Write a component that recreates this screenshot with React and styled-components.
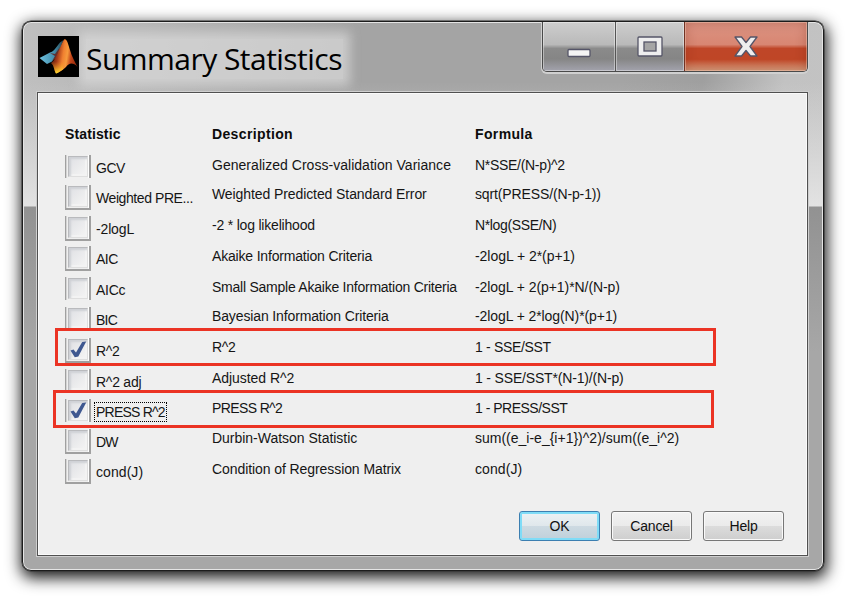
import React from 'react';
import styled, { createGlobalStyle, css } from 'styled-components';

const Global = createGlobalStyle`
  * { box-sizing: border-box; }
  body { margin: 0; background: #fff; font-family: "Liberation Sans", Arial, sans-serif; }
`;

const Desktop = styled.main`
  width: 858px;
  height: 600px;
  padding: 21px 0 0 22px;
  overflow: hidden;
  background: #fff;
`;

const Window = styled.section`
  display: flex;
  flex-direction: column;
  width: 802px;
  height: 550px;
  border: 1px solid #1c1c1c;
  border-radius: 9px;
  padding: 0 15px 14px 14px;
  box-shadow: inset 0 0 0 1px #e4e4e4, 0 0 0 0.5px #333, 1px 5px 15px 2px rgba(0, 0, 0, 0.9);
  background:
    linear-gradient(180deg, transparent 60px, rgba(232, 232, 232, 0.85) 184px, #929292 185px, #a7a7a7 330px, #a7a7a7 100%),
    linear-gradient(100deg, #c0c0c0 0, #b6b6b6 120px, #a4a4a4 330px, #a4a4a4 600px, #9f9f9f 680px, #c2c2c2 760px, #c4c4c4 100%);
`;

const TitleBar = styled.header`
  display: flex;
  align-items: flex-start;
  height: 70px;
  flex: none;
`;

const Logo = styled.svg`
  position: relative;
  flex: none;
  margin: 14px 0 0 1px;
`;

const Title = styled.h1`
  flex: none;
  margin: 17px 0 0 7px;
  width: 257px;
  font: 400 30px/40px "Open Sans", "Noto Sans", sans-serif;
  letter-spacing: -0.53px;
  white-space: nowrap;
  color: #000;
  background: rgba(218, 218, 218, 0.7);
  box-shadow: 0 0 10px 7px rgba(218, 218, 218, 0.7);
`;

const Controls = styled.div`
  display: flex;
  margin-left: auto;
  width: 266px;
  height: 50px;
  border: 1px solid #4a4a4a;
  border-top: 0;
  border-radius: 0 0 5px 5px;
  box-shadow: 0 1px 0 1px #d0d0d0;
  clip-path: inset(0 -3px -3px -3px);
  overflow: hidden;
`;

const Control = styled.button`
  display: grid;
  place-items: center;
  width: ${(p) => p.$width}px;
  padding: 0;
  border: 0;
  border-left: ${(p) => (p.$divided ? '1px solid #555' : '0')};
  box-shadow: inset 0 0 0 1px rgba(255, 255, 255, 0.4);
  background: linear-gradient(#cecece, #b9b9b9 46%, #8b8b8b 54%, #858585 75%, #a3a3ad);
  ${(p) => p.$close && css`
    border-left-color: #713223;
    box-shadow: inset 0 0 0 1px rgba(255, 220, 200, 0.4), inset 0 0 12px rgba(100, 20, 0, 0.3);
    background: linear-gradient(#dc9483, #d88672 46%, #bf4628 54%, #bf4626 76%, #dca585);
  `}
`;

const Panel = styled.div`
  position: relative;
  flex: 1;
  border: 1px solid #505050;
  box-shadow: 0 0 0 1px #cfcfcf, inset 0 0 0 1px #fafafa;
  background: #efefef;
  display: flex;
  flex-direction: column;
  padding: 31px 23px 14px 27px;
  font-size: 14px;
  color: #151515;
`;

const columns = css`
  display: grid;
  grid-template-columns: 147px 263px 1fr;
`;

const HeaderRow = styled.div`
  ${columns}
  height: 31px;
  flex: none;
  font-weight: 700;
  line-height: 22px;
  color: #0c0c0c;
`;

const Row = styled.div`
  ${columns}
  flex: none;
  height: ${(p) => p.$height}px;
`;

const Cell = styled.span`
  line-height: ${(p) => (p.$raised ? 18 : 20)}px;
  white-space: nowrap;
  letter-spacing: ${(p) => p.$spacing || 0}px;
`;

const Choice = styled.label`
  display: flex;
  align-items: flex-start;
  white-space: nowrap;
`;

const CheckFrame = styled.span`
  flex: none;
  width: 26px;
  height: ${(p) => (p.$clipped ? 23 : 25)}px;
  padding: 1px 1px 0 2px;
  border: solid #a0a0a0;
  border-width: 0 2px ${(p) => (p.$clipped ? 0 : 2)}px 1px;
  box-shadow: inset 1px 0 0 #d4d4d4, inset -1px 0 0 #fff;
`;

const CheckBox = styled.span`
  display: block;
  width: 20px;
  height: 21px;
  border: 1px solid #b9babd;
  border-right-color: #dedede;
  border-bottom-color: #dedede;
  box-shadow: inset 2px 2px 2px #cfd1d6, inset -2px -2px 1px #f3f3f3;
  background: linear-gradient(135deg, #dfe0e4, #f2f2f2 85%);
`;

const CheckMark = styled.svg`
  display: block;
`;

const ChoiceText = styled.span`
  margin: ${(p) => (p.$raised ? 3 : 4)}px 0 0 4px;
  padding: 0 1px;
  line-height: 18px;
  letter-spacing: ${(p) => p.$spacing || 0}px;
  outline: ${(p) => (p.$focused ? '1px dotted #000' : 'none')};
`;

const Actions = styled.footer`
  display: flex;
  justify-content: flex-end;
  gap: 11px;
  margin-top: auto;
`;

const Action = styled.button`
  width: 81px;
  height: 30px;
  padding: 0;
  border: 1px solid ${(p) => (p.$primary ? '#3c7fb1' : '#777')};
  border-radius: 3px;
  box-shadow: inset 0 0 0 ${(p) => (p.$primary ? '2px #7fdcf7' : '1px #fafafa')};
  background: ${(p) => (p.$primary
    ? 'linear-gradient(#edf2f5, #dfe7eb 50%, #cddae2 51%, #bfd0da)'
    : 'linear-gradient(#f2f2f2, #ebebeb 50%, #dcdcdc 51%, #cecece)')};
  font: 14px "Liberation Sans", Arial, sans-serif;
  letter-spacing: -0.2px;
  color: #111;
`;

const Highlight = styled.div`
  position: absolute;
  left: ${(p) => p.$left}px;
  top: ${(p) => p.$top}px;
  width: 661px;
  height: 38px;
  border: 3px solid #eb3324;
  pointer-events: none;
`;

/* spacing: letter spacing of the name, description and formula cells */
const rows = [
  { name: 'GCV', text: 'Generalized Cross-validation Variance', formula: 'N*SSE/(N-p)^2', h: 30, clipped: true, spacing: [-0.5, 0.03, -0.3] },
  { name: 'Weighted PRE...', text: 'Weighted Predicted Standard Error', formula: 'sqrt(PRESS/(N-p-1))', h: 31, raised: true, spacing: [-0.42, -0.09, -0.13] },
  { name: '-2logL', text: '-2 * log likelihood', formula: 'N*log(SSE/N)', h: 30, raised: true, spacing: [-0.15, -0.2, -0.35] },
  { name: 'AIC', text: 'Akaike Information Criteria', formula: '-2logL + 2*(p+1)', h: 31, spacing: [-0.5, -0.18, -0.05] },
  { name: 'AICc', text: 'Small Sample Akaike Information Criteria', formula: '-2logL + 2(p+1)*N/(N-p)', h: 30, clipped: true, spacing: [-0.25, -0.24, -0.07] },
  { name: 'BIC', text: 'Bayesian Information Criteria', formula: '-2logL + 2*log(N)*(p+1)', h: 31, clipped: true, raised: true, spacing: [-0.8, -0.13, -0.09] },
  { name: 'R^2', text: 'R^2', formula: '1 - SSE/SST', h: 31, checked: true, raised: true, spacing: [-0.3, -0.3, -0.33] },
  { name: 'R^2 adj', text: 'Adjusted R^2', formula: '1 - SSE/SST*(N-1)/(N-p)', h: 30, clipped: true, raised: true, spacing: [-0.25, -0.05, -0.17] },
  { name: 'PRESS R^2', text: 'PRESS R^2', formula: '1 - PRESS/SST', h: 30, checked: true, clipped: true, focused: true, raised: true, spacing: [-0.78, -0.62, -0.5] },
  { name: 'DW', text: 'Durbin-Watson Statistic', formula: 'sum((e_i-e_{i+1})^2)/sum((e_i^2)', h: 30, raised: true, spacing: [-0.9, -0.02, 0] },
  { name: 'cond(J)', text: 'Condition of Regression Matrix', formula: 'cond(J)', h: 30, spacing: [0.07, -0.08, 0.1] },
];

function MatlabLogo() {
  return (
    <Logo width="41" height="41" viewBox="0 0 41 41">
      <defs>
        <linearGradient id="peak" x1="0" y1="0.4" x2="1" y2="0.6">
          <stop offset="0" stopColor="#4a140c" />
          <stop offset="0.25" stopColor="#a53a18" />
          <stop offset="0.45" stopColor="#f08030" />
          <stop offset="0.6" stopColor="#f79a3c" />
          <stop offset="0.75" stopColor="#c4461a" />
          <stop offset="1" stopColor="#8c2408" />
        </linearGradient>
        <linearGradient id="base" x1="0" y1="0" x2="0" y2="1">
          <stop offset="0.65" stopColor="#f59a20" stopOpacity="0" />
          <stop offset="1" stopColor="#ffe22e" />
        </linearGradient>
        <linearGradient id="wing" x1="0" y1="0" x2="1" y2="0">
          <stop offset="0" stopColor="#6fc0de" />
          <stop offset="0.6" stopColor="#438fae" />
          <stop offset="1" stopColor="#28454f" />
        </linearGradient>
      </defs>
      <rect width="41" height="41" fill="#000" />
      <path d="M1.5 22 L12 16.5 C16 16 18 11 22 6.500 L25.500 4 L20 18 L14 25.500 L9 28 Z" fill="url(#wing)" />
      <path d="M12 17 L17 18 L22 11 L19 21 L14 25 L17 20 Z" fill="#5f3030" />
      <path d="M26 3.500 C29 2 30 8 32 14 C34 21 37 26 39.500 31 C35 26 31 27 28 31 C25 34 22 36 18 37.500 C16 34 16 29 13 27 C19 23 21 12 26 3.500 Z" fill="url(#peak)" />
      <path d="M26 3.500 C28 3 28 9 27 17 L25 33.500 C22 35 20 37 18 37.500 C16 34 16 29 13 27 C19 23 21 12 26 3.500 Z" fill="url(#base)" />
    </Logo>
  );
}

function Check() {
  return (
    <CheckMark width="18" height="19" viewBox="0 0 18 19">
      <path d="M1.500 10.500 L4.500 9.500 L7 12.500 L13.200 2 L17.200 1.500 L9.300 16.500 L5.800 17.200 Z" fill="#3f5890" />
    </CheckMark>
  );
}

function StatisticRow({ row }) {
  const [nameSpacing, textSpacing, formulaSpacing] = row.spacing;
  return (
    <Row $height={row.h}>
      <Choice>
        <CheckFrame $clipped={row.clipped}>
          <CheckBox>{row.checked && <Check />}</CheckBox>
        </CheckFrame>
        <ChoiceText $focused={row.focused} $spacing={nameSpacing}>{row.name}</ChoiceText>
      </Choice>
      <Cell $raised={row.raised} $spacing={textSpacing}>{row.text}</Cell>
      <Cell $raised={row.raised} $spacing={formulaSpacing}>{row.formula}</Cell>
    </Row>
  );
}

export default function App() {
  return (
    <>
      <Global />
      <Desktop>
        <Window>
          <TitleBar>
            <MatlabLogo />
            <Title>Summary Statistics</Title>
            <Controls>
              <Control $width={72} aria-label="Minimize">
                <svg width="24" height="50" viewBox="0 0 24 50"><rect x="1" y="27.500" width="22" height="7" rx="1" fill="#f4f4f4" stroke="#555568" strokeWidth="1.300" /></svg>
              </Control>
              <Control $width={69} $divided aria-label="Maximize">
                <svg width="26" height="50" viewBox="0 0 26 50">
                  <rect x="1" y="15" width="24" height="19" rx="1" fill="#eee" stroke="#555568" strokeWidth="1.300" />
                  <rect x="7" y="20" width="12" height="9" fill="#a5a5a5" stroke="#555568" strokeWidth="1.300" />
                </svg>
              </Control>
              <Control $width={123} $divided $close aria-label="Close">
                <svg width="24" height="50" viewBox="0 0 24 50"><path d="M1 15 H7.500 L12 20.500 L16.500 15 H23 L16 24.500 L23 34 H16.500 L12 28.500 L7.500 34 H1 L8 24.500 Z" fill="#eee" stroke="#555568" strokeWidth="1.300" strokeLinejoin="round" /></svg>
              </Control>
            </Controls>
          </TitleBar>
          <Panel>
            <HeaderRow>
              <Cell $spacing={0.12}>Statistic</Cell>
              <Cell $spacing={0.36}>Description</Cell>
              <Cell $spacing={0.36}>Formula</Cell>
            </HeaderRow>
            {rows.map((row) => <StatisticRow key={row.name} row={row} />)}
            <Highlight $left={17} $top={235} />
            <Highlight $left={15} $top={297} />
            <Actions>
              <Action $primary>OK</Action>
              <Action>Cancel</Action>
              <Action>Help</Action>
            </Actions>
          </Panel>
        </Window>
      </Desktop>
    </>
  );
}
